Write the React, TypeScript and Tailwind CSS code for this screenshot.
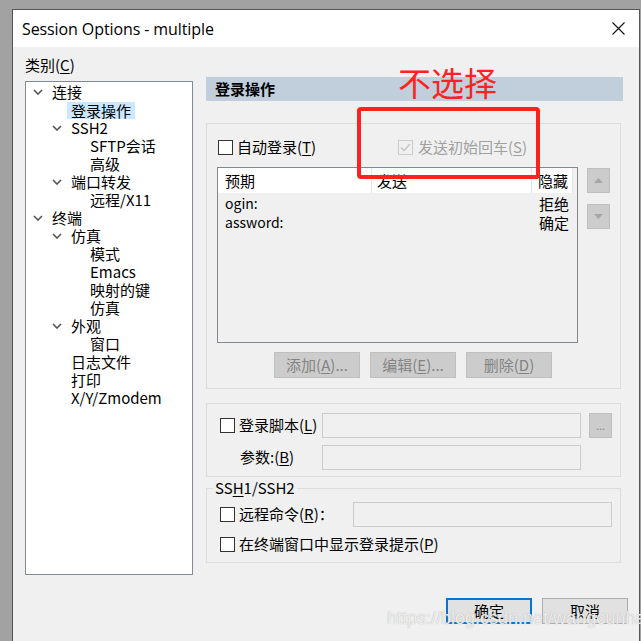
import React from "react";

type Node = { t: string; l: 0 | 1 | 2; c?: boolean; sel?: boolean };

const tree: Node[] = [
  { t: "连接", l: 0, c: true },
  { t: "登录操作", l: 1, sel: true },
  { t: "SSH2", l: 1, c: true },
  { t: "SFTP会话", l: 2 },
  { t: "高级", l: 2 },
  { t: "端口转发", l: 1, c: true },
  { t: "远程/X11", l: 2 },
  { t: "终端", l: 0, c: true },
  { t: "仿真", l: 1, c: true },
  { t: "模式", l: 2 },
  { t: "Emacs", l: 2 },
  { t: "映射的键", l: 2 },
  { t: "仿真", l: 2 },
  { t: "外观", l: 1, c: true },
  { t: "窗口", l: 2 },
  { t: "日志文件", l: 1 },
  { t: "打印", l: 1 },
  { t: "X/Y/Zmodem", l: 1 },
];

const indent = ["pl-[7px]", "pl-[26px]", "pl-[45px]"];

function Chevron() {
  return (
    <svg width="10" height="6" viewBox="0 0 10 6" className="block">
      <path d="M1 1 L5 5 L9 1" fill="none" stroke="#555" strokeWidth="1.6" />
    </svg>
  );
}

function Check({ disabled = false, checked = false }: { disabled?: boolean; checked?: boolean }) {
  return (
    <span
      className={
        disabled
          ? "w-[15px] h-[15px] border border-[#cccccc] bg-[#f0f0f0] flex items-center justify-center shrink-0"
          : "w-[15px] h-[15px] border border-[#333333] bg-white flex items-center justify-center shrink-0"
      }
    >
      {checked && (
        <svg width="11" height="9" viewBox="0 0 11 9">
          <path d="M1 4.5 L4 7.5 L10 1" fill="none" stroke="#c4c4c4" strokeWidth="1.4" />
        </svg>
      )}
    </span>
  );
}

function Key({ k }: { k: string }) {
  return (
    <>
      (<span className="underline underline-offset-2">{k}</span>)
    </>
  );
}

function GrayBtn({ children }: { children: React.ReactNode }) {
  return (
    <div className="w-[86px] h-[26px] bg-[#cccccc] border border-[#bfbfbf] flex items-center justify-center text-[#838383] text-[15px]">
      {children}
    </div>
  );
}

export default function App() {
  return (
    <div className="relative w-[641px] h-[641px] overflow-hidden bg-[#a2a2a2] pt-[9px] pl-[12px] font-['Noto_Sans_CJK_SC',sans-serif] text-[15px] text-black">
      <div className="w-[628px] h-[640px] border-l border-t border-r border-[#555555] bg-[#f0f0f0] flex flex-col">
        {/* Title bar */}
        <div className="h-[37px] bg-white flex items-center justify-between pl-[9px] pr-[14px]">
          <span className="font-['Open_Sans','Noto_Sans',sans-serif] text-[16px] tracking-[-0.1px]">
            Session Options - multiple
          </span>
          <svg width="13" height="13" viewBox="0 0 13 13">
            <path d="M0.5 0.5 L12.5 12.5 M12.5 0.5 L0.5 12.5" stroke="#111" strokeWidth="1.1" />
          </svg>
        </div>

        {/* Body */}
        <div className="flex">
          {/* Category tree */}
          <div className="w-[180px] pl-[12px] pt-[8px]">
            <div className="h-[20px] leading-[20px]">
              类别<Key k="C" />
            </div>
            <div className="mt-[6px] h-[494px] border border-[#838a94] bg-white pt-[1px]">
              {tree.map((n, i) => (
                <div key={i} className={`h-[18px] flex items-center ${indent[n.l]}`}>
                  <span className="w-[10px] mr-[9px] flex justify-center">{n.c && <Chevron />}</span>
                  {n.sel ? (
                    <span className="bg-[#cce8ff] px-[4px] -ml-[4px] h-[17px] leading-[17px]">{n.t}</span>
                  ) : (
                    <span className="leading-[18px]">{n.t}</span>
                  )}
                </div>
              ))}
            </div>
          </div>

          {/* Right panel */}
          <div className="ml-[13px] pt-[30px]">
            <div className="w-[417px] h-[24px] bg-[#c1cfdc] pl-[9px] flex items-center font-bold">登录操作</div>

            {/* Login actions group */}
            <div className="mt-[22px] w-[415px] h-[266px] border border-[#dcdcdc] pt-[15px] pl-[10px]">
              <div className="flex items-center h-[16px]">
                <div className="w-[180px] flex items-center gap-[4px] ml-[1px]">
                  <Check />
                  <span>
                    自动登录<Key k="T" />
                  </span>
                </div>
                <div className="flex items-center gap-[5px] text-[#a0a0a0]">
                  <Check disabled checked />
                  <span>
                    发送初始回车<Key k="S" />
                  </span>
                </div>
              </div>

              <div className="mt-[12px] flex">
                <div className="w-[361px] h-[176px] border border-[#828790] bg-[#f0f0f0]">
                  <div className="h-[25px] bg-white flex mr-[4px]">
                    <div className="w-[154px] border-r border-[#e5e5e5] pl-[7px] leading-[25px]">预期</div>
                    <div className="w-[160px] border-r border-[#e5e5e5] pl-[5px] leading-[25px]">发送</div>
                    <div className="flex-1 border-r border-[#e5e5e5] pl-[6px] leading-[25px]">隐藏</div>
                  </div>
                  <div className="flex pt-[1px] text-[14px]">
                    <div className="w-[314px] pl-[7px]">
                      <div className="h-[19px] leading-[19px]">ogin:</div>
                      <div className="h-[19px] leading-[19px]">assword:</div>
                    </div>
                    <div className="pl-[7px] text-[15px]">
                      <div className="h-[19px] leading-[19px]">拒绝</div>
                      <div className="h-[19px] leading-[19px]">确定</div>
                    </div>
                  </div>
                </div>
                <div className="ml-[9px] pt-[1px] flex flex-col gap-[11px]">
                  {["up", "down"].map((d) => (
                    <div
                      key={d}
                      className="w-[23px] h-[25px] bg-[#cccccc] border border-[#bfbfbf] flex items-center justify-center"
                    >
                      <svg width="9" height="5" viewBox="0 0 9 5">
                        <path d={d === "up" ? "M0 5 L4.5 0 L9 5 Z" : "M0 0 L4.5 5 L9 0 Z"} fill="#a6a6a6" />
                      </svg>
                    </div>
                  ))}
                </div>
              </div>

              <div className="mt-[9px] ml-[57px] flex gap-[10px]">
                <GrayBtn>
                  添加<Key k="A" />...
                </GrayBtn>
                <GrayBtn>
                  编辑<Key k="E" />...
                </GrayBtn>
                <GrayBtn>
                  删除<Key k="D" />
                </GrayBtn>
              </div>
            </div>

            {/* Login script group */}
            <div className="mt-[14px] w-[415px] h-[74px] border border-[#dcdcdc] pt-[9px]">
              <div className="flex items-center h-[25px]">
                <div className="w-[115px] pl-[13px] flex items-center gap-[4px]">
                  <Check />
                  <span className="whitespace-nowrap">
                    登录脚本<Key k="L" />
                  </span>
                </div>
                <div className="w-[259px] h-[25px] border border-[#cccccc] bg-[#f0f0f0]" />
                <div className="ml-[8px] w-[23px] h-[25px] bg-[#cccccc] border border-[#bfbfbf] flex items-center justify-center text-[#8a8a8a] text-[11px] leading-none">
                  ...
                </div>
              </div>
              <div className="mt-[7px] flex items-center h-[25px]">
                <div className="w-[115px] pl-[33px] whitespace-nowrap">
                  参数:<Key k="B" />
                </div>
                <div className="w-[259px] h-[25px] border border-[#cccccc] bg-[#f0f0f0]" />
              </div>
            </div>

            {/* SSH1/SSH2 group */}
            <fieldset className="mt-[3px] w-[415px] border border-[#dcdcdc] pb-[10px]">
              <legend className="ml-[6px] px-[2px] leading-[16px]">
                SS<span className="underline underline-offset-2">H</span>1/SSH2
              </legend>
              <div className="mt-[6px] flex items-center h-[25px]">
                <div className="w-[146px] pl-[13px] flex items-center gap-[4px]">
                  <Check />
                  <span className="whitespace-nowrap">
                    远程命令<Key k="R" />：
                  </span>
                </div>
                <div className="w-[259px] h-[25px] border border-[#cccccc] bg-[#f0f0f0]" />
              </div>
              <div className="mt-[9px] pl-[13px] flex items-center gap-[4px] h-[16px]">
                <Check />
                <span>
                  在终端窗口中显示登录提示<Key k="P" />
                </span>
              </div>
            </fieldset>
          </div>
        </div>

        {/* Bottom buttons */}
        <div className="mt-[23px] flex justify-end gap-[10px] pr-[11px]">
          <div className="w-[86px] h-[26px] border-2 border-[#0078d7] bg-[#e1e1e1] flex items-center justify-center">
            确定
          </div>
          <div className="w-[86px] h-[26px] border border-[#adadad] bg-[#e1e1e1] flex items-center justify-center">
            取消
          </div>
        </div>
      </div>

      {/* Red annotation */}
      <div className="absolute left-[398px] top-[62px] text-[33px] leading-[40px] text-[#ff2222]">不选择</div>
      <div className="absolute left-[357px] top-[107px] w-[183px] h-[72px] border-4 border-[#ff2020] rounded-[4px]" />

      {/* Watermark */}
      <div className="absolute left-[387px] top-[606px] text-[18px] leading-[24px] text-white/80 font-['Liberation_Sans',sans-serif] [text-shadow:0_0_1px_#9a9a9a]">
        https://blog.csdn.net/wangcunhang
      </div>
    </div>
  );
}
